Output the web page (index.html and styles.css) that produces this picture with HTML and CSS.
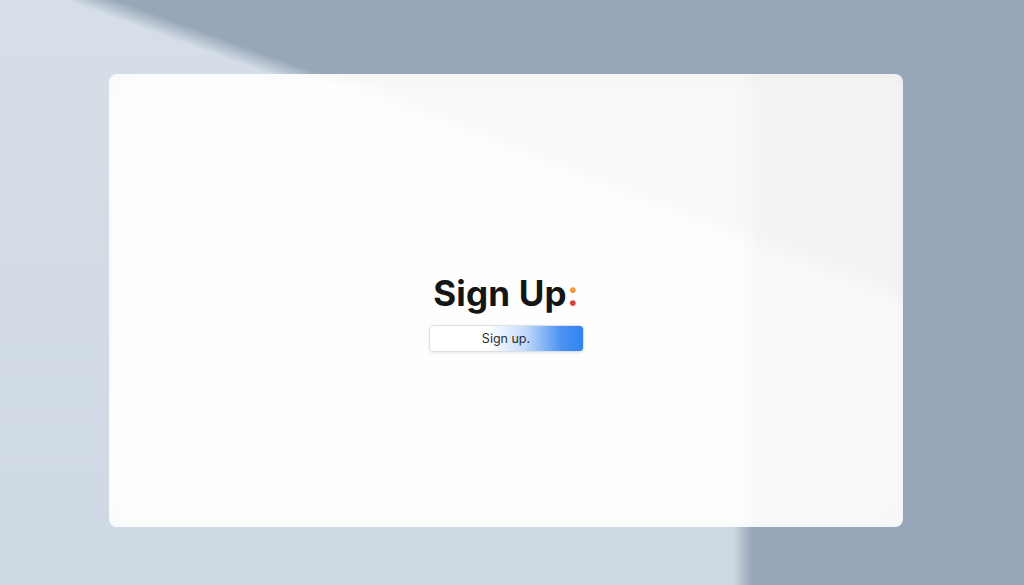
FILE: index.html
```html
<!DOCTYPE html>
<html lang="en">
<head>
    <meta charset="UTF-8">
    <meta name="viewport" content="width=device-width, initial-scale=1.0">
    <title>Sign Up</title>
    <link rel="stylesheet" href="styles.css">
</head>
<body>
    <main class="card">
        <div class="signup">
            <h1 class="signup-title">Sign Up<span class="colon">:</span></h1>
            <button class="signup-btn" type="button">Sign up.</button>
        </div>
    </main>
</body>
</html>
```

FILE: styles.css
```css
*{
    box-sizing: border-box;
    margin: 0;
}

html, body {
    height: 100%;
}

/* light wall, with the shadow falling in from the top right */
body {
    font-family: Inter, "Open Sans", Arial, sans-serif;
    background:
        linear-gradient(19.95deg, transparent 63.6%, #97a6b8 65.6%),
        linear-gradient(90deg, transparent 733px, #b3c0cd 742px, #97a6b8 752px),
        linear-gradient(180deg, #d6dfe8, #cfd9e3);
    display: flex;
    padding: 74px 121px 58px 109px;
    overflow: hidden;
}

.card {
    flex: 1;
    display: flex;
    align-items: center;
    justify-content: center;
    padding-top: 23px;
    border-radius: 8px;
    background:
        linear-gradient(21.4deg, transparent 69%, rgba(110, 110, 95, 0.04) 72%),
        linear-gradient(90deg, transparent 628px, rgba(0, 0, 0, 0.018) 650px),
        #fefefe;
    box-shadow: inset 0 0 18px rgba(150, 160, 175, 0.08);
}

.signup {
    display: flex;
    flex-direction: column;
    align-items: center;
    gap: 11px;
}

.signup-title {
    font-size: 35px;
    font-weight: 700;
    color: #151515;
    letter-spacing: 0.2px;
}

.colon {
    background: linear-gradient(180deg, #f0a03c 45%, #d4463f 55%);
    -webkit-background-clip: text;
    background-clip: text;
    color: transparent;
}

.signup-btn {
    width: 155px;
    height: 27px;
    border: 1px solid #dde1e6;
    border-radius: 4px;
    background: linear-gradient(90deg, #ffffff 38%, #c4dafa 62%, #4a92f2 86%, #2f84f0 100%);
    font-family: inherit;
    font-size: 12.5px;
    color: #2c2f33;
    box-shadow: 0 1px 3px rgba(60, 80, 110, 0.12);
}
```
